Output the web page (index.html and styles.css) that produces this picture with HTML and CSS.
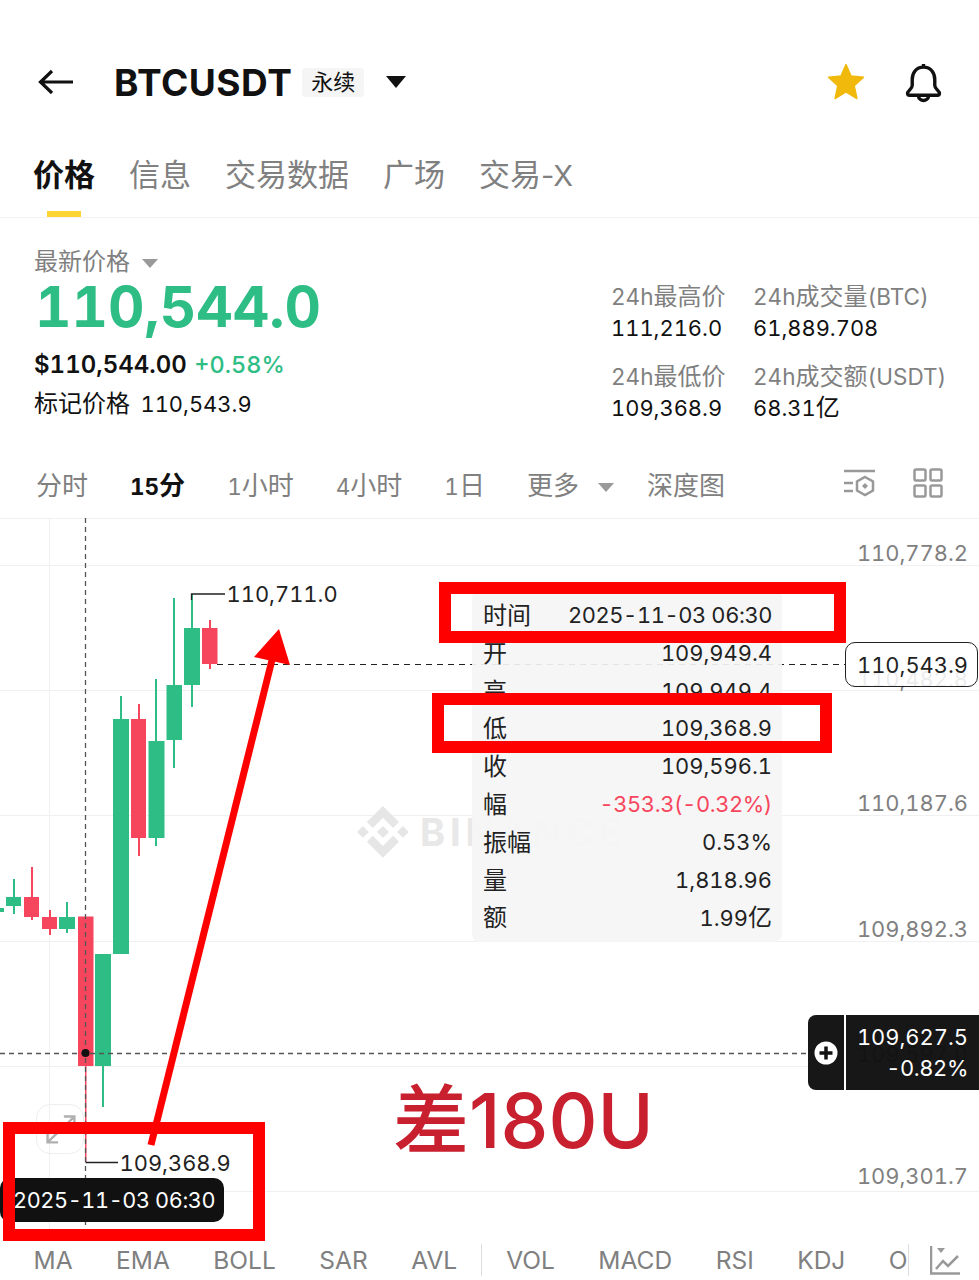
FILE: index.html
```html
<!DOCTYPE html>
<html lang="zh-CN">
<head>
  <meta charset="UTF-8">
  <meta name="viewport" content="width=device-width, initial-scale=1.0">
  <title>BTCUSDT</title>
  <link rel="stylesheet" href="styles.css">
</head>
<body>
  <div class="topbar">
    <svg class="back-icon" viewBox="0 0 36 26"><path d="M35 13H3M14 2 2.500 13 14 24"/></svg>
    <div class="symbol">BTCUSDT</div>
    <div class="chip">永续</div>
    <div class="caret"></div>
    <svg class="star-icon" viewBox="0 0 38 38"><path d="M19 1.500 24 13 36.500 14.300 27.200 22.700 29.900 35.500 19 28.900 8.100 35.500 10.800 22.700 1.500 14.300 14 13Z"/></svg>
    <svg class="bell-icon" viewBox="0 0 38 40"><path d="M19 5C11.500 5 8 11 8 17V23C8 26 4 28 3.500 30 3 32 4 32.500 5.500 32.500H32.500C34 32.500 35 32 34.500 30 34 28 30 26 30 23V17C30 11 26.500 5 19 5ZM19 2V5M14 33C14.500 39 23.500 39 24 33"/></svg>
  </div>

  <div class="tabs">
    <div class="tab active">价格</div>
    <div class="tab">信息</div>
    <div class="tab">交易数据</div>
    <div class="tab">广场</div>
    <div class="tab">交易<span class="tab-x">-X</span></div>
  </div>

  <div class="price-section">
    <div class="price-main">
      <div class="price-label">最新价格 <span class="caret-small"></span></div>
      <div class="price-big">110,544.0</div>
      <div class="price-usd">$110,544.00 <span class="price-change">+0.58%</span></div>
      <div class="price-mark">标记价格 <span class="num">110,543.9</span></div>
    </div>
    <div class="stats">
      <div class="stat"><div class="stat-label"><span class="num">24h</span>最高价</div><div class="stat-val"><span class="num">111,216.0</span></div></div>
      <div class="stat"><div class="stat-label"><span class="num">24h</span>成交量<span class="num">(BTC)</span></div><div class="stat-val"><span class="num">61,889.708</span></div></div>
      <div class="stat"><div class="stat-label"><span class="num">24h</span>最低价</div><div class="stat-val"><span class="num">109,368.9</span></div></div>
      <div class="stat"><div class="stat-label"><span class="num">24h</span>成交额<span class="num">(USDT)</span></div><div class="stat-val"><span class="num">68.31</span>亿</div></div>
    </div>
  </div>

  <div class="timeframes">
    <div class="tf">分时</div>
    <div class="tf active"><span class="num">15</span>分</div>
    <div class="tf"><span class="num">1</span>小时</div>
    <div class="tf"><span class="num">4</span>小时</div>
    <div class="tf"><span class="num">1</span>日</div>
    <div class="tf tf-more">更多 <span class="caret-small"></span></div>
    <div class="tf">深度图</div>
    <svg class="tf-icon settings-icon" viewBox="0 0 34 30"><path d="M1 3H32M1 15H10M1 23H10"/><path d="M22 9 30 13.500V22.500L22 27 14 22.500V13.500Z"/><path class="fill" d="M22 15 25 18 22 21 19 18Z"/></svg>
    <svg class="tf-icon grid-icon" viewBox="0 0 30 30"><rect x="1.500" y="1.500" width="11" height="11" rx="1.500"/><rect x="17.500" y="1.500" width="11" height="11" rx="1.500"/><rect x="1.500" y="17.500" width="11" height="11" rx="1.500"/><rect x="17.500" y="17.500" width="11" height="11" rx="1.500"/></svg>
  </div>

  <div class="chart">
    <svg class="chart-layer" viewBox="0 518 979 724">
      <g class="grid">
        <path d="M0 518.500H979M0 565.500H979M0 690.500H979M0 815.500H979M0 941.500H979M0 1066.500H979M0 1191.500H979M49.500 518V1240"/>
      </g>
      <g class="axis">
        <text x="968" y="561">110,778.2</text>
        <text x="968" y="687">110,482.8</text>
        <text x="968" y="811">110,187.6</text>
        <text x="968" y="937">109,892.3</text>
        <text x="968" y="1062">109,597.0</text>
        <text x="968" y="1184">109,301.7</text>
      </g>

      <!-- logo only, the word is a text node -->
      <g class="mark-logo" transform="translate(357 806) scale(.413)">
        <path d="M38.171 53.203 62.759 28.616l24.6 24.600 14.307-14.307L62.759 0 23.864 38.896z"/>
        <path d="M0 62.759l14.307-14.307 14.307 14.307-14.307 14.307z"/>
        <path d="M38.171 72.315 62.759 96.903 87.358 72.303l14.315 14.300-38.914 38.915L23.864 86.623z"/>
        <path d="M96.903 62.765l14.307-14.307 14.307 14.307-14.307 14.307z"/>
        <path d="M77.271 62.752 62.759 48.234 48.254 62.740l14.505 14.526z"/>
      </g>
      <text class="mark-word" x="420" y="846" textLength="202">BINANCE</text>

      <g class="up">
        <rect x="0" y="908" width="4" height="4"/>
        <rect x="13" y="879" width="2" height="35"/><rect x="6" y="897" width="15" height="9"/>
        <rect x="66" y="902" width="2" height="31"/><rect x="59" y="917" width="16" height="12"/>
        <rect x="102" y="1066" width="2" height="41"/><rect x="95" y="954" width="16" height="112"/>
        <rect x="120" y="696" width="2" height="30"/><rect x="113" y="719" width="16" height="235"/>
        <rect x="155" y="679" width="2" height="167"/><rect x="148.500" y="741" width="16" height="97"/>
        <rect x="173" y="598" width="2" height="170"/><rect x="166.500" y="685" width="15.500" height="55"/>
        <rect x="191" y="594" width="2" height="113"/><rect x="184" y="628" width="16" height="57"/>
      </g>
      <g class="down">
        <rect x="31" y="867" width="2" height="53"/><rect x="24" y="897" width="15" height="20"/>
        <rect x="49" y="910" width="2" height="25"/><rect x="42" y="917" width="15" height="12"/>
        <rect x="85" y="1060" width="1.500" height="102"/><rect x="78" y="916.500" width="15.500" height="149.500"/>
        <rect x="138" y="704" width="2" height="152"/><rect x="131" y="719" width="15" height="119"/>
        <rect x="209" y="620" width="2" height="49"/><rect x="202" y="628" width="15.500" height="36"/>
      </g>

      <path class="crosshair" d="M85.500 518V1226M0 1053.500H808"/>
      <path class="last-line" d="M217 664.500H846"/>
      <circle cx="85.500" cy="1053" r="4" class="dot"/>

      <path class="leader" d="M225 594H191.500V600M118 1162.500H85.500"/>
      <text class="peak-label" x="226.500" y="602">110,711.0</text>
      <text class="peak-label" x="119.500" y="1171">109,368.9</text>
    </svg>

    <div class="expand-btn">
      <svg viewBox="0 0 48 50"><path d="M11 39 39 12M28 12H39V22M11 28V39H22"/></svg>
    </div>

    <div class="ohlc">
      <div class="ohlc-row"><span>时间</span><span class="num tight">2025-11-03 06:30</span></div>
      <div class="ohlc-row"><span>开</span><span class="num">109,949.4</span></div>
      <div class="ohlc-row"><span>高</span><span class="num">109,949.4</span></div>
      <div class="ohlc-row"><span>低</span><span class="num">109,368.9</span></div>
      <div class="ohlc-row"><span>收</span><span class="num">109,596.1</span></div>
      <div class="ohlc-row"><span>幅</span><span class="num tight neg">-353.3(-0.32%)</span></div>
      <div class="ohlc-row"><span>振幅</span><span class="num">0.53%</span></div>
      <div class="ohlc-row"><span>量</span><span class="num">1,818.96</span></div>
      <div class="ohlc-row"><span>额</span><span><span class="num">1.99</span>亿</span></div>
    </div>

    <div class="mark-box">110,543.9</div>

    <div class="live-box">
      <div class="live-plus">
        <svg viewBox="0 0 24 24"><circle cx="12" cy="12" r="11.500"/><path d="M12 5.500V18.500M5.500 12H18.500"/></svg>
      </div>
      <div class="live-vals"><div>109,627.5</div><div class="tight">-0.82%</div></div>
    </div>

    <div class="time-tag"><span class="tight">2025-11-03 06:30</span></div>

    <svg class="chart-layer notes" viewBox="0 518 979 724">
      <rect x="445" y="588" width="395" height="49"/>
      <rect x="438" y="699" width="388" height="48"/>
      <rect x="9" y="1128" width="250" height="107"/>
      <path class="arrow-shaft" d="M151 1145 272 660"/>
      <path class="arrow-head" d="M279 629 254 657 290 665Z"/>
    </svg>
    <div class="gap-note">差180U</div>
  </div>

  <div class="indicators">
    <span class="ind">MA</span>
    <span class="ind">EMA</span>
    <span class="ind">BOLL</span>
    <span class="ind">SAR</span>
    <span class="ind">AVL</span>
    <span class="ind-sep"></span>
    <span class="ind">VOL</span>
    <span class="ind">MACD</span>
    <span class="ind">RSI</span>
    <span class="ind">KDJ</span>
    <span class="ind">O</span>
    <span class="ind-sep ind-sep2"></span>
    <svg class="ind-icon" viewBox="0 0 30 30"><path d="M1 1V28.500H30M6 24 13 16 18 21 28 11"/><path class="fill" d="M7 3H15L11 8Z"/></svg>
  </div>
</body>
</html>
```

FILE: styles.css
```css
body {
  margin: 0;
  width: 979px;
  height: 1280px;
  overflow: hidden;
  background-color: #fff;
  color: #111;
  font-family: Inter, "Noto Sans CJK SC", sans-serif;
  font-variant-numeric: tabular-nums;
}
.num {
  font-size: 21.900px;
}
.tight {
  letter-spacing: -0.400px;
  white-space: nowrap;
}

/* top bar */
.topbar {
  display: flex;
  align-items: center;
  height: 52px;
  padding: 56px 36px 0 38px;
}
.back-icon {
  width: 36px;
  height: 26px;
  fill: none;
  stroke: #111;
  stroke-width: 3.2;
}
.symbol {
  margin-left: 40px;
  font-size: 37px;
  font-weight: 700;
  letter-spacing: 0.5px;
}
.chip {
  margin-left: 10px;
  padding: 0 9px;
  height: 29px;
  line-height: 29px;
  background-color: #f5f5f5;
  border-radius: 4px;
  font-size: 22px;
}
.caret {
  margin-left: 22px;
  width: 0;
  height: 0;
  border-left: 10px solid transparent;
  border-right: 10px solid transparent;
  border-top: 12px solid #111;
}
.star-icon {
  margin-left: auto;
  width: 38px;
  height: 38px;
  fill: #f0b90b;
  stroke: #f0b90b;
  stroke-width: 1.500;
  stroke-linejoin: round;
}
.bell-icon {
  margin-left: 39px;
  width: 39px;
  height: 41px;
  fill: none;
  stroke: #111;
  stroke-width: 3.300;
}

/* tabs */
.tabs {
  display: flex;
  gap: 34px;
  margin-top: 47px;
  padding-left: 33px;
  border-bottom: 1px solid #f2f2f2;
}
.tab {
  position: relative;
  height: 40px;
  line-height: 40px;
  padding-bottom: 22px;
  font-size: 31px;
  color: #808080;
}
.tab-x {
  font-size: 29px;
  font-variant-numeric: normal;
  letter-spacing: -1px;
}
.tab.active {
  color: #111;
  font-weight: 600;
}
.tab.active::after {
  content: "";
  position: absolute;
  left: 14px;
  bottom: 0;
  width: 34px;
  height: 6px;
  background-color: #fcd535;
}

/* price block */
.price-section {
  display: flex;
  justify-content: space-between;
  height: 242px;
  padding-left: 34px;
  box-sizing: border-box;
}
.price-main {
  padding-top: 27px;
}
.price-label {
  height: 34px;
  line-height: 34px;
  font-size: 24px;
  color: #808080;
}
.caret-small {
  display: inline-block;
  margin-left: 6px;
  vertical-align: middle;
  border-left: 8px solid transparent;
  border-right: 8px solid transparent;
  border-top: 9px solid #999;
}
.price-big {
  height: 60px;
  line-height: 56px;
  margin-left: 1px;
  font-size: 56.500px;
  font-weight: 700;
  color: #2ebd85;
}
.price-usd {
  margin-top: 8px;
  height: 36px;
  line-height: 36px;
  font-size: 24px;
  font-weight: 600;
}
.price-change {
  margin-left: 1px;
  font-size: 23.500px;
  font-weight: 500;
  color: #2ebd85;
}
.price-mark {
  margin-top: 3px;
  height: 36px;
  line-height: 36px;
  font-size: 24px;
}
.price-mark .num {
  margin-left: 4px;
}
.stats {
  display: grid;
  grid-template-columns: 142px 225px;
  grid-auto-rows: 80px;
  padding-top: 63px;
  margin-right: 1px;
}
.stat-label {
  height: 31px;
  line-height: 31px;
  font-size: 24px;
  color: #808080;
  white-space: nowrap;
}
.stat-label .num {
  font-size: 22.500px;
}
.stat-val {
  height: 31px;
  line-height: 32px;
  font-size: 24px;
}

/* timeframe row */
.timeframes {
  display: flex;
  align-items: center;
  gap: 42px;
  height: 46px;
  padding: 0 36px 12px 36px;
}
.tf {
  font-size: 26px;
  color: #808080;
  white-space: nowrap;
}
.tf .num {
  font-size: 22.500px;
}
.tf.active {
  color: #111;
  font-weight: 700;
}
.tf-more {
  margin-right: -9px;
}
.tf-more .caret-small {
  margin-left: 12px;
}
.tf-icon {
  fill: none;
  stroke: #999;
  stroke-width: 2.500;
}
.tf-icon .fill {
  fill: #999;
  stroke: none;
}
.settings-icon {
  width: 34px;
  height: 30px;
  margin-left: auto;
  margin-right: -6px;
}
.grid-icon {
  width: 30px;
  height: 30px;
}

/* chart */
.chart {
  position: relative;
  height: 722px;
}
.chart-layer {
  position: absolute;
  left: 0;
  top: 0;
  width: 979px;
  height: 724px;
}
.grid path {
  fill: none;
  stroke: #f0f0f0;
  stroke-width: 1;
}
.axis text {
  text-anchor: end;
  font-size: 21.900px;
  fill: #808080;
}
.mark-logo {
  fill: #e6e6e6;
}
.mark-word {
  font-size: 38px;
  font-weight: 700;
  fill: #e8e8e8;
}
.up {
  fill: #2ebd85;
}
.down {
  fill: #f6465d;
}
.crosshair {
  fill: none;
  stroke: #555;
  stroke-width: 1.300;
  stroke-dasharray: 5 4;
}
.last-line {
  fill: none;
  stroke: #222;
  stroke-width: 1.200;
  stroke-dasharray: 6 5;
}
.dot {
  fill: #111;
}
.leader {
  fill: none;
  stroke: #222;
  stroke-width: 1.300;
}
.peak-label {
  font-size: 21.900px;
  fill: #222;
}
.expand-btn {
  position: absolute;
  left: 36px;
  top: 586px;
  width: 48px;
  height: 50px;
  border: 1px solid #eee;
  border-radius: 14px;
  box-sizing: border-box;
}
.expand-btn svg {
  display: block;
  width: 46px;
  height: 48px;
  fill: none;
  stroke: #b0b0b0;
  stroke-width: 2.500;
}
.ohlc {
  position: absolute;
  left: 472px;
  top: 72px;
  width: 310px;
  padding: 7px 10px 5px 11px;
  box-sizing: border-box;
  background-color: rgba(245, 245, 246, 0.92);
  border-radius: 8px;
}
.ohlc-row {
  display: flex;
  justify-content: space-between;
  height: 37.800px;
  line-height: 37.800px;
  font-size: 24px;
  color: #222;
}
.neg {
  color: #f6465d;
}
.mark-box {
  position: absolute;
  left: 845px;
  top: 124px;
  width: 133px;
  height: 45px;
  line-height: 45px;
  padding-left: 2px;
  text-align: center;
  box-sizing: border-box;
  border: 1.500px solid #222;
  border-radius: 10px;
  background-color: rgba(255, 255, 255, 0.85);
  font-size: 21.900px;
  color: #222;
}
.live-box {
  position: absolute;
  left: 808px;
  top: 497px;
  display: flex;
  width: 171px;
  height: 75px;
  background-color: rgba(15, 15, 15, 0.97);
  border-radius: 8px 0 0 8px;
  color: #fff;
}
.live-plus {
  display: flex;
  align-items: center;
  justify-content: center;
  width: 36px;
  border-right: 2px solid #fff;
}
.live-plus svg {
  width: 24px;
  height: 24px;
}
.live-plus circle {
  fill: #fff;
}
.live-plus path {
  fill: none;
  stroke: #111;
  stroke-width: 3.500;
}
.live-vals {
  flex: 1;
  padding: 7px 11px 0 0;
  text-align: right;
  font-size: 21.900px;
  line-height: 31px;
}
.time-tag {
  position: absolute;
  left: 0;
  top: 660px;
  width: 224px;
  height: 44px;
  line-height: 44px;
  padding-left: 13px;
  box-sizing: border-box;
  background-color: #111;
  border-radius: 10px;
  font-size: 21.700px;
  color: #fff;
}
.notes {
  fill: none;
  stroke: #f00;
  stroke-width: 12;
}
.arrow-shaft {
  stroke-width: 7;
}
.arrow-head {
  fill: #f00;
  stroke: none;
}
.gap-note {
  position: absolute;
  left: 393px;
  top: 560px;
  font-size: 76px;
  line-height: 84px;
  font-weight: 500;
  font-variant-numeric: normal;
  color: #c8202f;
}

/* indicator row */
.indicators {
  display: flex;
  align-items: center;
  gap: 43.500px;
  height: 40px;
  padding-left: 33.500px;
  font-size: 24.500px;
  color: #808080;
}
.ind {
  white-space: nowrap;
}
.ind-sep {
  flex-shrink: 0;
  width: 1px;
  height: 32px;
  margin: 0 -19.500px;
  background-color: #ddd;
}
.ind-sep2 {
  margin: 0 -22.500px 0 -43.500px;
}
.ind-icon {
  flex-shrink: 0;
  width: 30px;
  height: 30px;
  fill: none;
  stroke: #999;
  stroke-width: 2.500;
}
.ind-icon .fill {
  fill: #999;
  stroke: none;
}
```
